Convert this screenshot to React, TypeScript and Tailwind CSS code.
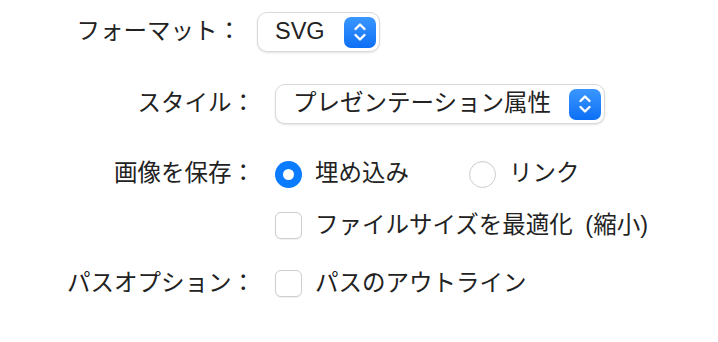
import React from 'react';

const font = "font-['Liberation_Sans','Noto_Sans_CJK_JP',sans-serif]";

const Stepper: React.FC = () => (
    <div className="flex h-[31px] w-[32px] items-center justify-center rounded-[7px] bg-gradient-to-b from-[#3a97ff] to-[#0a6ff5]">
        <svg width="14" height="22" viewBox="0 0 14 22" fill="none">
            <path d="M2.5 8 L7 3.5 L11.5 8" stroke="white" strokeWidth="2.4" strokeLinecap="round" strokeLinejoin="round" />
            <path d="M2.5 14 L7 18.5 L11.5 14" stroke="white" strokeWidth="2.4" strokeLinecap="round" strokeLinejoin="round" />
        </svg>
    </div>
);

const PopUp: React.FC<{ value: string; width: string; gap: string }> = ({ value, width, gap }) => (
    <div className={`flex h-[40px] items-center rounded-[10px] border border-[#dadada] bg-white pl-[17px] pr-[3px] shadow-[0_1px_2px_rgba(0,0,0,0.12)] ${width}`}>
        <span className={`flex-1 whitespace-nowrap ${gap}`}>{value}</span>
        <Stepper />
    </div>
);

const Radio: React.FC<{ checked?: boolean }> = ({ checked }) =>
    checked ? (
        <div className="flex h-[27px] w-[27px] items-center justify-center rounded-full bg-[#0b7bff]">
            <div className="h-[11px] w-[11px] rounded-full bg-white" />
        </div>
    ) : (
        <div className="h-[27px] w-[27px] rounded-full border border-[#cdcdcd] bg-white shadow-[inset_0_1px_1px_rgba(0,0,0,0.04)]" />
    );

const Checkbox: React.FC = () => (
    <div className="h-[27px] w-[27px] rounded-[6px] border border-[#cfcfcf] bg-white shadow-[0_0.5px_1px_rgba(0,0,0,0.06)]" />
);

const Label: React.FC<{ text: string }> = ({ text }) => (
    <div className="w-[255px] shrink-0 whitespace-nowrap text-right">{text}</div>
);

export default function App() {
    return (
        <div className={`flex h-[342px] w-[718px] flex-col bg-white text-[23.5px] leading-none text-[#222222] ${font}`}>
            <div className="mt-[12px] flex items-center gap-[16px]">
                <div className="w-[241px] shrink-0 whitespace-nowrap text-right">フォーマット：</div>
                <PopUp value="SVG" width="w-[123px]" gap="mr-[14px]" />
            </div>

            <div className="mt-[32px] flex items-center gap-[20px]">
                <Label text="スタイル：" />
                <PopUp value="プレゼンテーション属性" width="w-[330px]" gap="mr-[10px]" />
            </div>

            <div className="mt-[36px] flex h-[28px] items-center gap-[20px]">
                <Label text="画像を保存：" />
                <div className="flex items-center">
                    <div className="flex w-[194px] items-center gap-[13px]">
                        <Radio checked />
                        <span>埋め込み</span>
                    </div>
                    <div className="flex items-center gap-[13px]">
                        <Radio />
                        <span>リンク</span>
                    </div>
                </div>
            </div>

            <div className="mt-[24px] flex h-[27px] items-center gap-[20px]">
                <div className="w-[255px] shrink-0" />
                <div className="flex items-center gap-[13px]">
                    <Checkbox />
                    <span className="whitespace-nowrap">
                        ファイルサイズを最適化 <span className="ml-[6px]">(縮小)</span>
                    </span>
                </div>
            </div>

            <div className="mt-[31px] flex h-[27px] items-center gap-[20px]">
                <Label text="パスオプション：" />
                <div className="flex items-center gap-[13px]">
                    <Checkbox />
                    <span>パスのアウトライン</span>
                </div>
            </div>
        </div>
    );
}
